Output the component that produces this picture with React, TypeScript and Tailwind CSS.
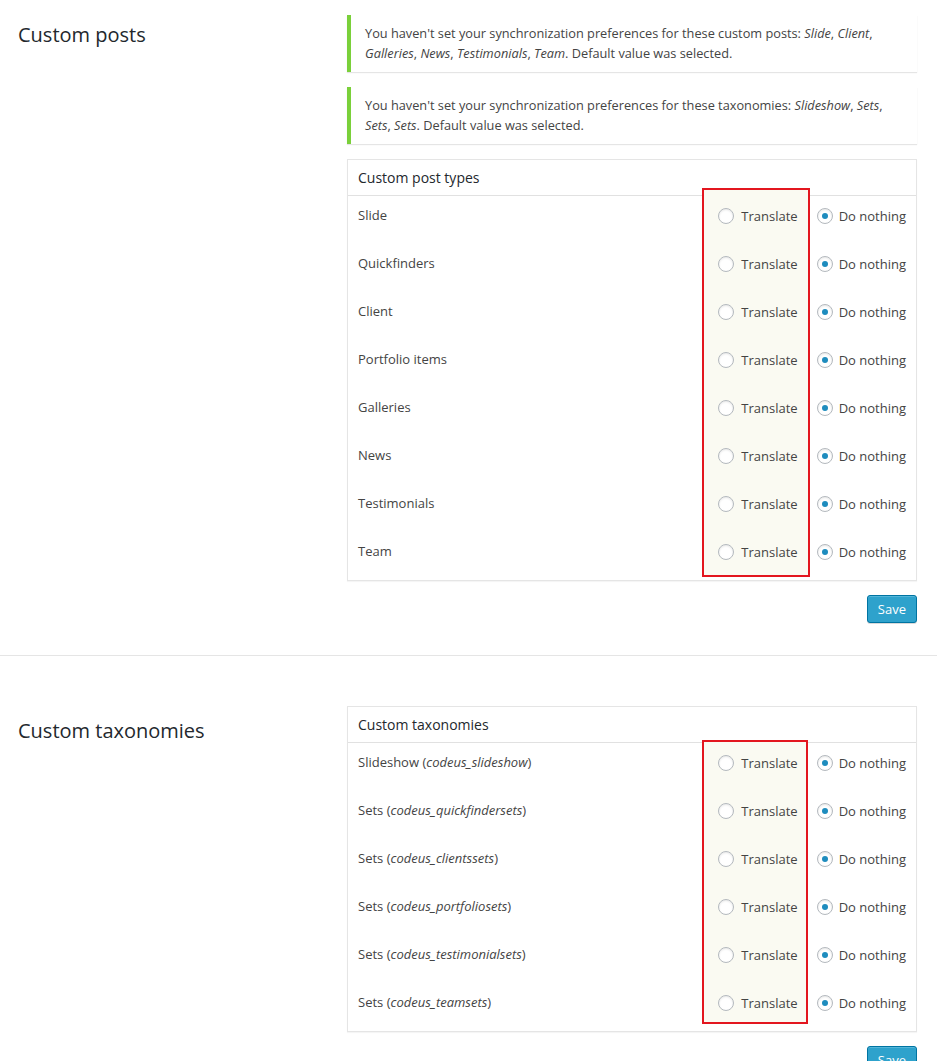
import React from "react";

const font = { fontFamily: '"Open Sans", "Noto Sans", sans-serif' };

function Radio({ checked }: { checked?: boolean }) {
  return (
    <span className="flex h-4 w-4 shrink-0 items-center justify-center rounded-full border border-[#b4b9be] bg-white shadow-[inset_0_1px_2px_rgba(0,0,0,0.1)]">
      {checked ? <span className="h-[6px] w-[6px] rounded-full bg-[#1e8cbe]" /> : null}
    </span>
  );
}

function Row({ label }: { label: React.ReactNode }) {
  return (
    <div className="flex h-12 items-start justify-between pl-[10px] pr-[10px] pt-[10px]">
      <div className="-mt-px text-[13px] leading-5 text-[#444]">{label}</div>
      <div className="relative z-[1] flex items-center text-[13px] leading-5 text-[#444]">
        <span className="flex items-center gap-[7px]">
          <Radio />
          <span>Translate</span>
        </span>
        <span className="ml-[19px] flex items-center gap-[6px]">
          <Radio checked />
          <span>Do nothing</span>
        </span>
      </div>
    </div>
  );
}

function Table({
  title,
  rows,
  box,
}: {
  title: string;
  rows: React.ReactNode[];
  box: string;
}) {
  return (
    <div className="relative border border-[#e5e5e5] bg-white shadow-[0_1px_1px_rgba(0,0,0,0.04)]">
      <div className={box} />
      <div className="border-b border-[#e1e1e1] px-[10px] py-2 text-[14px] leading-[19px] text-[#23282d]">
        {title}
      </div>
      {rows.map((r, i) => (
        <Row key={i} label={r} />
      ))}
    </div>
  );
}

function SaveButton() {
  return (
    <div className="flex justify-end">
      <button className="h-7 rounded-[3px] border border-[#0074a2] bg-[#2ea2cc] px-[10px] text-[13px] leading-[25px] text-white shadow-[inset_0_1px_0_rgba(120,200,230,0.5),0_1px_0_rgba(0,0,0,0.15)]">
        Save
      </button>
    </div>
  );
}

function Notice({ children }: { children: React.ReactNode }) {
  return (
    <div className="border-l-4 border-[#7ad03a] bg-white pb-[9px] pl-[14px] pr-3 pt-2 text-[12.75px] leading-5 text-[#444] shadow-[0_1px_1px_rgba(0,0,0,0.1)]">
      {children}
    </div>
  );
}

export default function App() {
  const posts = [
    "Slide",
    "Quickfinders",
    "Client",
    "Portfolio items",
    "Galleries",
    "News",
    "Testimonials",
    "Team",
  ];
  const taxes: [string, string][] = [
    ["Slideshow", "codeus_slideshow"],
    ["Sets", "codeus_quickfindersets"],
    ["Sets", "codeus_clientssets"],
    ["Sets", "codeus_portfoliosets"],
    ["Sets", "codeus_testimonialsets"],
    ["Sets", "codeus_teamsets"],
  ];
  return (
    <div className="min-h-[1061px] w-[937px] overflow-hidden bg-white" style={font}>
      <section className="flex border-b border-[#e5e5e5] pb-[32px] pt-[15px]">
        <div className="w-[347px] pl-[18px]">
          <h3 className="mt-[6px] text-[20px] font-normal leading-7 text-[#23282d]">Custom posts</h3>
        </div>
        <div className="flex w-[570px] flex-col gap-[15px]">
          <Notice>
            You haven't set your synchronization preferences for these custom posts: <i>Slide</i>,{" "}
            <i>Client</i>, <i>Galleries</i>, <i>News</i>, <i>Testimonials</i>, <i>Team</i>. Default value
            was selected.
          </Notice>
          <Notice>
            You haven't set your synchronization preferences for these taxonomies: <i>Slideshow</i>,{" "}
            <i>Sets</i>, <i>Sets</i>, <i>Sets</i>. Default value was selected.
          </Notice>
          <div className="flex flex-col gap-[14px]">
            <Table
              title="Custom post types"
              rows={posts}
              box="absolute left-[354px] top-[28px] h-[389px] w-[108px] border-2 border-[#e3161f] bg-[#fafaf2]"
            />
            <SaveButton />
          </div>
        </div>
      </section>
      <section className="flex pt-[50px]">
        <div className="w-[347px] pl-[18px]">
          <h3 className="mt-[11px] text-[20px] font-normal leading-7 text-[#23282d]">Custom taxonomies</h3>
        </div>
        <div className="flex w-[570px] flex-col gap-[14px]">
          <Table
            title="Custom taxonomies"
            rows={taxes.map(([a, b]) => (
              <span>
                {a} (<i>{b}</i>)
              </span>
            ))}
            box="absolute left-[354px] top-[33px] h-[284px] w-[106px] border-2 border-[#e3161f] bg-[#fafaf2]"
          />
          <SaveButton />
        </div>
      </section>
    </div>
  );
}
